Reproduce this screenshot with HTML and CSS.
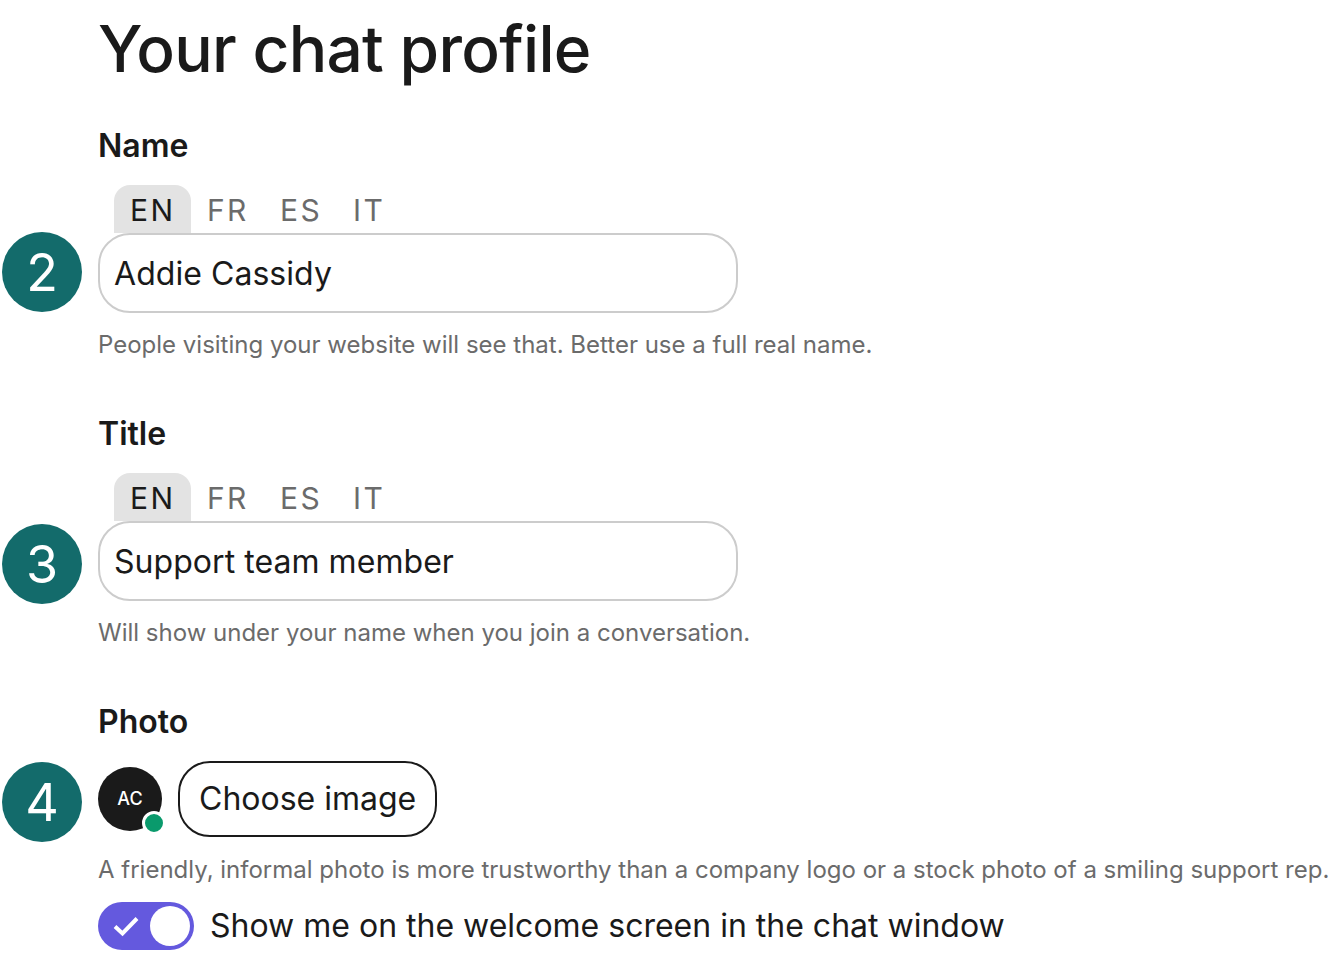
FILE: index.html
```html
<!DOCTYPE html>
<html lang="en">
<head>
  <meta charset="UTF-8" />
  <title>Your chat profile</title>
  <link rel="stylesheet" href="styles.css">
</head>
<body>
  <div class="page">
    <h1>Your chat profile</h1>

    <div class="field field-name">
      <div class="label">Name</div>
      <div class="tabs">
        <span class="tab active">EN</span>
        <span class="tab">FR</span>
        <span class="tab">ES</span>
        <span class="tab">IT</span>
      </div>
      <div class="step">2</div>
      <div class="input">Addie Cassidy</div>
      <div class="hint">People visiting your website will see that. Better use a full real name.</div>
    </div>

    <div class="field field-title">
      <div class="label">Title</div>
      <div class="tabs">
        <span class="tab active">EN</span>
        <span class="tab">FR</span>
        <span class="tab">ES</span>
        <span class="tab">IT</span>
      </div>
      <div class="step">3</div>
      <div class="input">Support team member</div>
      <div class="hint">Will show under your name when you join a conversation.</div>
    </div>

    <div class="field field-photo">
      <div class="label">Photo</div>
      <div class="step">4</div>
      <div class="photo-row">
        <div class="avatar">AC<span class="online"></span></div>
        <button class="choose">Choose image</button>
      </div>
      <div class="hint">A friendly, informal photo is more trustworthy than a company logo or a stock photo of a smiling support rep.</div>
      <div class="welcome">
        <span class="switch">
          <svg class="check" width="26" height="22" viewBox="0 0 26 22"><path d="M2 11.5l7.5 7L24 3.5" fill="none" stroke="#fff" stroke-width="4"/></svg>
          <span class="knob"></span>
        </span>
        <span class="welcome-text">Show me on the welcome screen in the chat window</span>
      </div>
    </div>
  </div>
</body>
</html>
```

FILE: styles.css
```css
* {
  box-sizing: border-box;
}

body {
  margin: 0;
  font-family: 'Inter', sans-serif;
  background-color: #fff;
  color: #1a1a1a;
  overflow: hidden;
}

.page {
  padding-left: 2px;
}

h1 {
  margin: 10px 0 0 96px;
  font-size: 64px;
  line-height: 78px;
  font-weight: 500;
  letter-spacing: -0.7px;
  white-space: nowrap;
}

.field {
  display: grid;
  grid-template-columns: 80px 1fr;
  column-gap: 16px;
}

.field > * {
  grid-column: 2;
}

.field-name {
  margin-top: 37px;
}

.field-title,
.field-photo {
  margin-top: 52px;
}

.label {
  font-size: 32px;
  line-height: 42px;
  font-weight: 600;
}

.tabs {
  display: flex;
  margin: 18px 0 0 16px;
  height: 48px;
}

.tab {
  padding: 0 16px;
  width: 77px;
  font-size: 30px;
  line-height: 50px;
  letter-spacing: 2.4px;
  color: #6b6b6b;
}

.tab + .tab {
  width: 73px;
}

.tab.active {
  background-color: #e3e3e3;
  color: #1a1a1a;
  border-radius: 16px 16px 0 0;
}

.step {
  grid-column: 1;
  width: 80px;
  height: 80px;
  border-radius: 50%;
  background-color: #136b6b;
  color: #fff;
  font-size: 52px;
  line-height: 82px;
  text-align: center;
}

.field-name .step {
  margin-top: -1px;
}

.field-title .step {
  margin: 3px 0 -3px;
}

.field-photo .step {
  margin-top: 1px;
}

.input {
  width: 640px;
  height: 80px;
  padding: 0 14px;
  border: 2px solid #ccc;
  border-radius: 32px;
  font-size: 32px;
  line-height: 78px;
  letter-spacing: 0.05px;
}

.hint {
  margin-top: 16px;
  font-size: 24px;
  line-height: 32px;
  color: #6b6b6b;
  white-space: nowrap;
}

.photo-row {
  display: flex;
  align-items: center;
  gap: 16px;
  height: 76px;
}

.field-photo .label {
  margin-bottom: 18px;
}

.avatar {
  position: relative;
  width: 64px;
  height: 64px;
  border-radius: 50%;
  background-color: #1a1a1a;
  color: #fff;
  font-size: 18px;
  font-weight: 500;
  line-height: 64px;
  text-align: center;
}

.online {
  position: absolute;
  right: -4px;
  bottom: -4px;
  width: 24px;
  height: 24px;
  border: 3px solid #fff;
  border-radius: 50%;
  background-color: #0a9a6c;
}

.choose {
  height: 76px;
  padding: 0 19px 2px;
  border: 2px solid #1a1a1a;
  border-radius: 32px;
  background: #fff;
  font-family: inherit;
  font-size: 32px;
  color: #1a1a1a;
}

.field-photo .hint {
  margin-top: 12px;
}

.welcome {
  display: flex;
  align-items: center;
  gap: 16px;
  margin-top: 16px;
}

.switch {
  display: flex;
  align-items: center;
  justify-content: space-between;
  width: 96px;
  height: 48px;
  padding: 0 4px 0 15px;
  border-radius: 24px;
  background-color: #6459de;
}

.knob {
  width: 40px;
  height: 40px;
  border-radius: 50%;
  background-color: #fff;
}

.welcome-text {
  padding-bottom: 2px;
  font-size: 32px;
  white-space: nowrap;
}
```
